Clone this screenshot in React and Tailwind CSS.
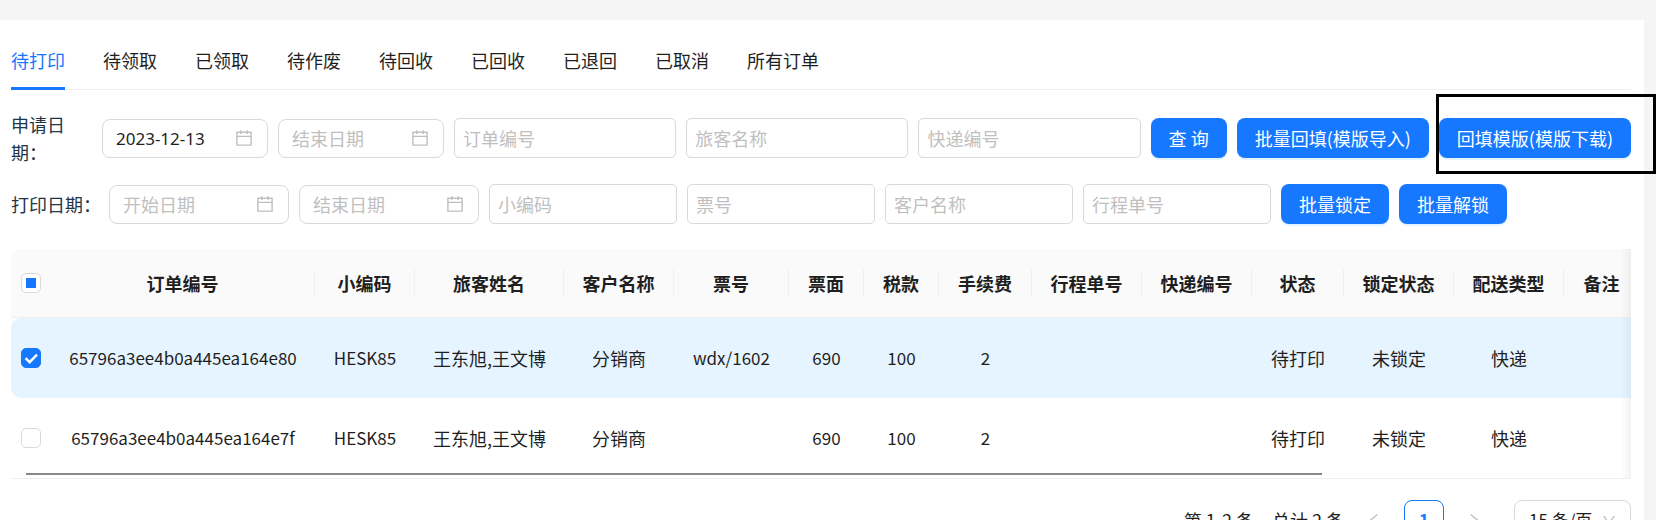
import React, { useState } from 'react';
import {
  AiOutlineCalendar,
  AiOutlineDown,
  AiOutlineLeft,
  AiOutlineRight,
} from 'react-icons/ai';

const tabs = ['待打印', '待领取', '已领取', '待作废', '待回收', '已回收', '已退回', '已取消', '所有订单'];

// 表格列配置
const columns = [
  { key: 'id', title: '订单编号', width: 264, latin: true },
  { key: 'pnr', title: '小编码', width: 100, latin: true },
  { key: 'passenger', title: '旅客姓名', width: 149 },
  { key: 'customer', title: '客户名称', width: 110 },
  { key: 'ticket', title: '票号', width: 115, latin: true },
  { key: 'price', title: '票面', width: 75, latin: true },
  { key: 'tax', title: '税款', width: 75, latin: true },
  { key: 'fee', title: '手续费', width: 93, latin: true },
  { key: 'tripNo', title: '行程单号', width: 110 },
  { key: 'expressNo', title: '快递编号', width: 110 },
  { key: 'status', title: '状态', width: 92 },
  { key: 'lock', title: '锁定状态', width: 110 },
  { key: 'delivery', title: '配送类型', width: 110 },
  { key: 'remark', title: '备注', width: 76 },
];

const orders = [
  {
    id: '65796a3ee4b0a445ea164e80',
    pnr: 'HESK85',
    passenger: '王东旭,王文博',
    customer: '分销商',
    ticket: 'wdx/1602',
    price: 690,
    tax: 100,
    fee: 2,
    status: '待打印',
    lock: '未锁定',
    delivery: '快递',
  },
  {
    id: '65796a3ee4b0a445ea164e7f',
    pnr: 'HESK85',
    passenger: '王东旭,王文博',
    customer: '分销商',
    price: 690,
    tax: 100,
    fee: 2,
    status: '待打印',
    lock: '未锁定',
    delivery: '快递',
  },
];

function DateInput({ id, label, placeholder, defaultValue, className }) {
  return (
    <div className={`${className} flex h-[39px] min-w-0 items-center rounded-lg border border-[#d9d9d9] bg-white px-[13px]`}>
      <input
        id={id}
        type="text"
        aria-label={label}
        placeholder={placeholder}
        defaultValue={defaultValue}
        className={`${
          defaultValue ? "font-['Noto_Sans','Noto_Sans_CJK_SC',sans-serif] text-[17px]" : 'text-[18px]'
        } h-full w-full min-w-0 flex-1 text-[#1f1f1f] outline-none placeholder:text-[#bfbfbf]`}
      />
      <AiOutlineCalendar className="size-5 shrink-0 text-[#bfbfbf]" />
    </div>
  );
}

function TextInput({ placeholder, className }) {
  return (
    <input
      type="text"
      aria-label={placeholder}
      placeholder={placeholder}
      className={`${className} h-10 min-w-0 rounded-[5px] border border-[#d9d9d9] bg-white px-2 text-[18px] outline-none placeholder:text-[#bfbfbf]`}
    />
  );
}

function PrimaryButton({ children }) {
  return (
    <button
      type="button"
      className="h-10 shrink-0 whitespace-nowrap rounded-lg bg-[#1677ff] px-[18px] text-[18px] text-white shadow-[0_2px_0_rgba(5,145,255,0.1)]"
    >
      {children}
    </button>
  );
}

function Checkbox({ label, checked, indeterminate, onChange }) {
  return (
    <label className="grid place-items-center">
      <input
        type="checkbox"
        aria-label={label}
        checked={checked}
        onChange={onChange}
        className="col-start-1 row-start-1 size-5 appearance-none rounded-[5px] border border-[#d9d9d9] bg-white checked:border-[#1677ff] checked:bg-[#1677ff]"
      />
      {checked && (
        <svg viewBox="0 0 20 20" className="col-start-1 row-start-1 size-5" fill="none" stroke="white" strokeWidth="2.4">
          <path d="M4.6 10.2 L8.6 14.2 L16 6.6" />
        </svg>
      )}
      {indeterminate && <span className="col-start-1 row-start-1 size-[10px] bg-[#1677ff]" />}
    </label>
  );
}

function OrderTable() {
  const [selected, setSelected] = useState([orders[0].id]);
  const allSelected = selected.length === orders.length;

  const toggle = (id) => {
    setSelected(prev => (prev.includes(id) ? prev.filter(item => item !== id) : [...prev, id]));
  };

  return (
    <div className="relative mt-[25px] overflow-hidden border-b border-[#f0f0f0]">
      <table className="w-full min-w-[1629px] table-fixed border-separate border-spacing-0 text-center text-[#1f1f1f]">
        <colgroup>
          <col style={{ width: 40 }} />
          {columns.map(col => (
            <col key={col.key} style={{ width: col.width }} />
          ))}
        </colgroup>
        <thead>
          <tr>
            <th className="h-[69px] rounded-tl-[10px] border-b border-[#f0f0f0] bg-[#fafafa] p-0">
              <Checkbox
                label="全选"
                checked={allSelected}
                indeterminate={selected.length > 0 && !allSelected}
                onChange={() => setSelected(allSelected ? [] : orders.map(o => o.id))}
              />
            </th>
            {columns.map(col => (
              <th key={col.key} scope="col" className="border-b border-[#f0f0f0] bg-[#fafafa] p-0 text-[18px] font-bold">
                <div className="h-7 whitespace-nowrap border-r border-[#f0f0f0] leading-7">{col.title}</div>
              </th>
            ))}
          </tr>
        </thead>
        <tbody>
          {orders.map(order => {
            const active = selected.includes(order.id);
            return (
              <tr key={order.id}>
                <td className={`${active ? 'bg-[#e6f4ff]' : 'bg-white'} h-20 rounded-l-[10px] p-0`}>
                  <Checkbox
                    label={`选择 ${order.id}`}
                    checked={active}
                    onChange={() => toggle(order.id)}
                  />
                </td>
                {columns.map(col => (
                  <td
                    key={col.key}
                    className={`${active ? 'bg-[#e6f4ff]' : 'bg-white'} ${col.latin ? 'text-[17px]' : 'text-[18px]'} whitespace-nowrap p-0`}
                  >
                    {order[col.key]}
                  </td>
                ))}
              </tr>
            );
          })}
        </tbody>
      </table>
      {/* 右侧滚动阴影 */}
      <div className="pointer-events-none absolute inset-y-0 right-0 w-[10px] bg-linear-to-r from-transparent to-black/5" />
      {/* 横向滚动条 */}
      <div className="absolute bottom-[3px] left-[15px] h-[2px] w-4/5 bg-[#888888]" />
    </div>
  );
}

function Pagination() {
  return (
    <div className="mt-[21px] flex items-center justify-end text-[18px] text-[#1f1f1f]">
      <span className="mr-[18px]">第 1-2 条</span>
      <span className="mr-[10px]">总计 2 条</span>
      <button type="button" aria-label="上一页" className="grid size-10 place-items-center text-[#bfbfbf]">
        <AiOutlineLeft className="size-4" />
      </button>
      <button
        type="button"
        className="mx-[10px] size-10 rounded-lg border border-[#1677ff] bg-white text-[17px] font-bold text-[#1677ff]"
      >
        1
      </button>
      <button type="button" aria-label="下一页" className="grid size-10 place-items-center text-[#bfbfbf]">
        <AiOutlineRight className="size-4" />
      </button>
      <div className="ml-5 grid w-[117px] items-center">
        <select
          aria-label="每页条数"
          className="col-start-1 row-start-1 h-10 w-full appearance-none rounded-lg border border-[#d9d9d9] bg-white pl-[14px] text-[17px] outline-none"
        >
          <option>15 条/页</option>
          <option>30 条/页</option>
        </select>
        <AiOutlineDown className="pointer-events-none col-start-1 row-start-1 mr-[14px] size-4 justify-self-end text-[#bfbfbf]" />
      </div>
    </div>
  );
}

function App() {
  const [activeTab, setActiveTab] = useState('待打印');

  return (
    <div className="h-screen overflow-hidden bg-[#f5f5f5] pr-3 pt-5 font-['Noto_Sans_CJK_SC',sans-serif]">
      <div className="min-h-full bg-white pl-[11px] pr-[13px] pt-[26px]">
        {/* 标签页 */}
        <nav className="flex gap-[38px] border-b border-[#f0f0f0]">
          {tabs.map(tab => (
            <button
              key={tab}
              type="button"
              onClick={() => setActiveTab(tab)}
              className={`${
                activeTab === tab ? 'border-[#1677ff] text-[#1677ff]' : 'border-transparent text-[#1f1f1f]'
              } -mb-px whitespace-nowrap border-b-3 pb-[13px] text-[18px] leading-7`}
            >
              {tab}
            </button>
          ))}
        </nav>

        {/* 查询条件 */}
        <div className="mt-5 flex items-center gap-[10px]">
          <label htmlFor="apply-start" className="w-[81px] shrink-0 text-[18px] leading-7 text-[#213547]">
            申请日期：
          </label>
          <DateInput id="apply-start" label="申请开始日期" placeholder="开始日期" defaultValue="2023-12-13" className="w-[166px]" />
          <DateInput id="apply-end" label="申请结束日期" placeholder="结束日期" className="w-[166px]" />
          <TextInput placeholder="订单编号" className="flex-1" />
          <TextInput placeholder="旅客名称" className="flex-1" />
          <TextInput placeholder="快递编号" className="flex-1" />
          <PrimaryButton>查 询</PrimaryButton>
          <PrimaryButton>批量回填(模版导入)</PrimaryButton>
          <div className="relative shrink-0">
            <PrimaryButton>回填模版(模版下载)</PrimaryButton>
            <div className="pointer-events-none absolute -bottom-4 -left-[3px] -right-[25px] -top-6 border-3 border-black" />
          </div>
        </div>
        <div className="mt-[18px] flex items-center gap-[10px]">
          <label htmlFor="print-start" className="w-[88px] shrink-0 whitespace-nowrap text-[18px] leading-7 text-[#213547]">
            打印日期：
          </label>
          <DateInput id="print-start" label="打印开始日期" placeholder="开始日期" className="w-[180px]" />
          <DateInput id="print-end" label="打印结束日期" placeholder="结束日期" className="w-[180px]" />
          <TextInput placeholder="小编码" className="w-[188px]" />
          <TextInput placeholder="票号" className="w-[188px]" />
          <TextInput placeholder="客户名称" className="w-[188px]" />
          <TextInput placeholder="行程单号" className="w-[188px]" />
          <PrimaryButton>批量锁定</PrimaryButton>
          <PrimaryButton>批量解锁</PrimaryButton>
        </div>

        <OrderTable />
        <Pagination />
      </div>
    </div>
  );
}

export default App;
